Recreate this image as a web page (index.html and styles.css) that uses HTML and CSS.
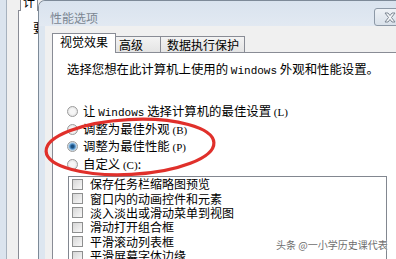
FILE: index.html
```html
<!DOCTYPE html>
<html lang="zh-CN">
<head>
<meta charset="utf-8">
<title>性能选项</title>
<link rel="stylesheet" href="styles.css">
</head>
<body>
<div class="screen">
  <div class="bgwin">
    <div class="bgframe"></div>
    <div class="bgclient">
      <div class="bgtabs"><span class="bgtab"><span class="bgtab-text">计</span></span></div>
      <div class="bgpanel">
        <div class="bgline">要</div>
      </div>
    </div>
  </div>
  <div class="dialog">
    <div class="titlebar">
      <span class="title">性能选项</span>
      <span class="close">
        <svg width="12" height="11" viewBox="0 0 12 11"><path d="M1 1h3l2 2.5L8 1h3L7.5 5.5 11 10H8L6 7.5 4 10H1l3.5-4.5z" fill="#f4f6f8" stroke="#7d8793" stroke-width="1" stroke-linejoin="round"/></svg>
      </span>
    </div>
    <div class="body">
      <div class="tabs">
        <div class="tab active">视觉效果</div>
        <div class="tab t2">高级</div>
        <div class="tab t3">数据执行保护</div>
      </div>
      <div class="panel">
        <p class="intro">选择您想在此计算机上使用的 <span class="lat">Windows</span> 外观和性能设置。</p>
        <div class="radios">
          <div class="radio-row"><span class="radio"></span><span>让 <span class="lat">Windows</span> 选择计算机的最佳设置 <span class="key">(L)</span></span></div>
          <div class="radio-row"><span class="radio"></span><span>调整为最佳外观 <span class="key">(B)</span></span></div>
          <div class="radio-row"><span class="radio on"></span><span>调整为最佳性能 <span class="key">(P)</span></span></div>
          <div class="radio-row"><span class="radio"></span><span>自定义 <span class="key">(C)</span>:</span></div>
        </div>
        <div class="listbox">
          <div class="item"><span class="cb"></span>保存任务栏缩略图预览</div>
          <div class="item"><span class="cb"></span>窗口内的动画控件和元素</div>
          <div class="item"><span class="cb"></span>淡入淡出或滑动菜单到视图</div>
          <div class="item"><span class="cb"></span>滑动打开组合框</div>
          <div class="item"><span class="cb"></span>平滑滚动列表框</div>
          <div class="item"><span class="cb"></span>平滑屏幕字体边缘</div>
        </div>
      </div>
    </div>
  </div>
  <svg class="annot" width="396" height="259" viewBox="0 0 396 259">
    <ellipse cx="130" cy="147" rx="84" ry="27.5" transform="rotate(-3 130 147)" fill="none" stroke="#e0302b" stroke-width="3.2"/>
  </svg>
  <div class="watermark">头条 @一小学历史课代表</div>
</div>
</body>
</html>
```

FILE: styles.css
```css
* { box-sizing: border-box; }
html, body { margin: 0; padding: 0; }
body {
  width: 396px;
  height: 259px;
  overflow: hidden;
  background: #f0f0f0;
  font-family: "Noto Sans CJK SC", "Liberation Sans", sans-serif;
  font-size: 12px;
  color: #000;
}
.screen {
  position: relative;
  display: flex;
  width: 396px;
  height: 259px;
  overflow: hidden;
}
.bgwin {
  display: flex;
  flex: none;
  width: 38px;
  height: 100%;
}
.bgframe {
  width: 7px;
  background: #dbe4ee;
  border-right: 1px solid #a7b2be;
}
.bgclient {
  flex: 1;
  display: flex;
  flex-direction: column;
  padding-left: 11px;
  background: #f0f0f0;
  overflow: hidden;
}
.bgtabs {
  display: flex;
  height: 10px;
  padding-left: 2px;
}
.bgtab {
  position: relative;
  z-index: 1;
  width: 20px;
  height: 11px;
  border: 1px solid #898c95;
  border-top: none;
  border-bottom: none;
  background: #fff;
  overflow: hidden;
  line-height: 12px;
}
.bgtab-text { display: block; margin-top: -4px; padding-left: 2px; }
.bgpanel {
  flex: 1;
  background: #fff;
  border-left: 1px solid #898c95;
  border-top: 1px solid #898c95;
  padding: 9px 0 0 14px;
  line-height: 16px;
  white-space: nowrap;
}
.dialog {
  flex: none;
  width: 372px;
  display: flex;
  flex-direction: column;
  background: #dde6f0;
  border: 1px solid #7d8a98;
  border-bottom: none;
  border-radius: 7px 7px 0 0;
}
.titlebar {
  height: 28px;
  display: flex;
  padding-left: 11px;
  background: linear-gradient(#d9e3ee, #e2e9f2);
  border-radius: 6px 6px 0 0;
}
.title {
  align-self: center;
  margin-top: 7px;
  color: #7b8692;
  font-size: 12px;
}
.close {
  margin-left: auto;
  margin-right: 4px;
  margin-top: 7px;
  width: 31px;
  height: 18px;
  display: flex;
  align-items: center;
  justify-content: center;
  border: 1px solid #8d99a7;
  border-radius: 3px;
  background: linear-gradient(#eef2f6, #d9e1ea);
}
.body {
  flex: 1;
  display: flex;
  flex-direction: column;
  margin: 0 6px;
  padding: 7px 0 0 7px;
  background: #f0f0f0;
}
.tabs {
  display: flex;
  align-items: flex-end;
  height: 19px;
}
.tab {
  height: 16px;
  border: 1px solid #898c95;
  border-bottom: none;
  background: linear-gradient(#f3f3f3, #e4e4e4);
  line-height: 15px;
  white-space: nowrap;
}
.tab.active {
  position: relative;
  z-index: 1;
  width: 64px;
  height: 20px;
  margin-bottom: -1px;
  padding-left: 7px;
  background: #fff;
  line-height: 15px;
}
.tab.t2 { width: 45px; padding-left: 3px; border-left: none; }
.tab.t3 { width: 84px; padding-left: 6px; border-left: none; }
.panel {
  flex: 1;
  background: #fff;
  border: 1px solid #898c95;
  padding-left: 14px;
}
.intro {
  margin: 0;
  padding-top: 8px;
  line-height: 16px;
  font-size: 12.4px;
  white-space: nowrap;
}
.lat {
  font-family: "Liberation Mono", monospace;
  font-size: 11px;
}
.key {
  font-family: "Liberation Serif", serif;
  font-size: 11px;
}
.radios { margin-top: 24px; font-size: 12.4px; }
.radio-row {
  height: 17.5px;
  display: flex;
  align-items: center;
  gap: 5px;
  line-height: 16px;
  white-space: nowrap;
}
.radio {
  flex: none;
  width: 11px;
  height: 11px;
  border-radius: 50%;
  border: 1px solid #9c9c9c;
  background: radial-gradient(circle, #f6f6f6 0 35%, #d8d8d8 100%);
}
.radio.on {
  background: radial-gradient(circle, #1b4f7e 0 20%, #4a8cc6 40%, #a9cbe6 58%, #e6e6e6 75%);
}
.listbox {
  margin: 3px 0 0 1px;
  width: 319px;
  height: 100px;
  border: 1px solid #828790;
  background: #fff;
  padding-left: 3px;
}
.item {
  height: 14.4px;
  display: flex;
  align-items: center;
  gap: 7px;
  line-height: 14px;
  white-space: nowrap;
}
.cb {
  flex: none;
  width: 11px;
  height: 11px;
  border: 1px solid #8e8f8f;
  background: linear-gradient(135deg, #d6d6d6, #f8f8f8);
}
.annot {
  position: absolute;
  left: 0;
  top: 0;
  pointer-events: none;
}
.watermark {
  position: absolute;
  left: 276px;
  top: 239px;
  font-size: 10px;
  line-height: 12px;
  color: #6e6e6e;
  text-shadow: 0 0 2px #fff, 0 0 1px #fff;
  white-space: nowrap;
}
```
